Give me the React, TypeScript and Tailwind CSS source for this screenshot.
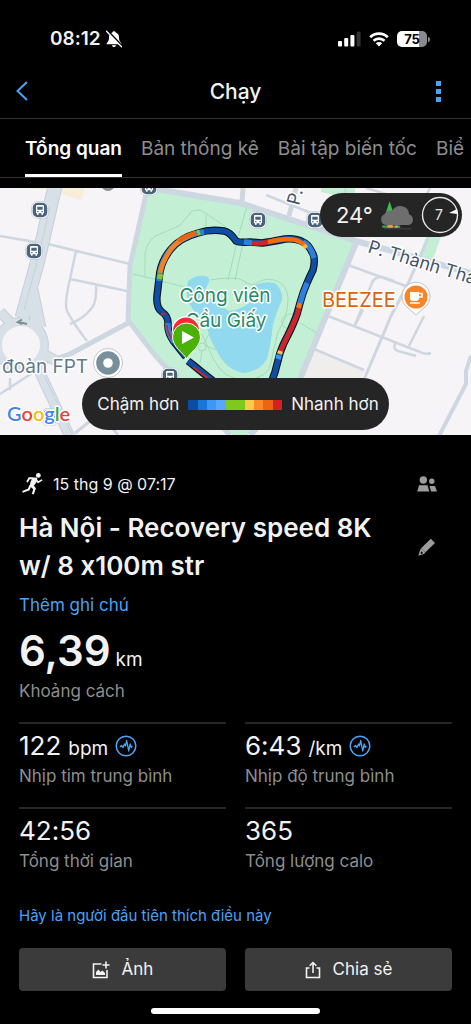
import React from "react";

const ROUTE =
  "M188 361 L192 364 L203 373 L222 388 L245 399 L262 396 L270 386 L275 372 L280 353 Q283 344 288 335 Q294 323 297 314 L300 303 Q303 292 307 283 Q310 276 313 270 Q316 258 312 252 Q308 244 303 242 Q296 238 285 239 Q270 242 262 243 L250 242 Q240 243 236 241 Q230 232 224 231 Q210 229 198 233 Q180 238 171 249 Q160 262 159 279 L157 296 Q156 308 162 312 Q168 316 168 323 Q167 332 174 342 L186 357";

function BusStop({ x, y }: { x: number; y: number }) {
  return (
    <g transform={`translate(${x} ${y})`}>
      <rect x="-8.5" y="-8.5" width="17" height="17" rx="6" fill="#fff" stroke="#b9bfc6" strokeWidth="0.6" />
      <rect x="-7.3" y="-7.3" width="14.6" height="14.6" rx="5" fill="#4a647d" />
      <path
        fillRule="evenodd"
        fill="#fff"
        d="M-4-4q0-1 1-1h6q1 0 1 1v7.3h-1v1.4h-1.600v-1.400h-2.800v1.400h-1.600v-1.400h-1zM-2.700-3.200v3h5.400v-3zM-2.800 1.100v1.200h1.300v-1.200zM1.500 1.100v1.200h1.300v-1.200z"
      />
    </g>
  );
}

function RouteMap() {
  const halo = { paintOrder: "stroke", stroke: "#fff", strokeWidth: 3, strokeLinejoin: "round" } as const;
  return (
    <svg
      viewBox="0 188 471 247"
      preserveAspectRatio="xMidYMid slice"
      className="block h-full w-full font-[Inter,sans-serif]"
      role="img"
      aria-label="Bản đồ"
    >
      <rect x="0" y="188" width="471" height="247" fill="#f6f4f6" />
      <path d="M60 188h24l-2 12-22-6zM28 188h18v2z" fill="#f7edd8" />
      <path d="M314 349l50 21-7 22h-62z" fill="#efeeec" />
      <path d="M321 188h34v6l-16 2-18-4zM427 234h15l-10 28h-15z" fill="#c3f0d5" />
      <path d="M147 188L240 203 356 241 296 384 248 435H232L184 384 150 350 128 318 130 266z" fill="#c3f0d5" />

      <g fill="none" stroke="#a0dcba" strokeWidth="1">
        <path d="M145 277V258q-1-12 10-22l24-10 13-15 8-1 8 5 18 12M206 215v14M133 274l25 6M158 280l30 8M237 242l-9 38M243 243l-8 37M247 206l-8 28q-6 6 3 8" />
        <path d="M210 280q24-4 32 0 10 8 16 2c12-6 30-2 30 18q0 16-10 32l-7 30q-2 16-25 18-22 0-32-20l-12-26M300 323l17 10M302 315q-14-4-20 4-2 8 8 10" />
        <circle cx="202" cy="347" r="4" />
        <path d="M186 332l14 12M206 346l10 4M202 351l-2 12M204 343l8-14" />
      </g>
      <path
        d="M188 281q10-8 20-4 3 3-1 9-4 7 2 12 6 4 20 13 16-2 24-12 6-10 2-14 8-4 20-2 8 7 7 17-4 8-9 24-2 20-6 35-8 13-24 14-18-4-26-22-6-8-10-23-12-14-18-25-4-12-1-22z"
        fill="#90d9ee"
      />

      <g fill="none" stroke="#cdd7e1" strokeLinejoin="round">
        <g strokeWidth="2.500">
          <path d="M0 236l35 6M48 244l82 20M76 251l-6 28q-6 25-3 32 6 12 20 30M70 279l57 12M96 286q1 18-6 24-6 8-20 14" />
          <path d="M0 394l37-24M10 378v12" />
          <path d="M348 265l55 20 24 8M355 325l17-42q2-6 10-6l12 4M328 316l92 36q6 3 11 1M395 343q-2 7 3 8l18 5M424 316l-15 30M363 310l-9 17M314 349l50 21M346 188l-3 10M366 188l20 6M266 195l50 20M430 188l-4 8" />
        </g>
        <path d="M429 236l-22 50-16 30-28 66" strokeWidth="3" />
        <path d="M243 188l-1 14M296 188l-7 28" strokeWidth="5" />
        <path d="M130 322l-60 32-24 8" strokeWidth="5" />
        <path d="M471 356l-5 15v13l-27 52" strokeWidth="4" />
        <path d="M75 433l18-14M118 435l-8-10" strokeWidth="3" />
      </g>
      <g fill="none" stroke="#cdd7e1" strokeLinejoin="round">
        <path d="M147 190l-17 76-2 54 26 34 32 36 44 45" strokeWidth="5" />
        <path d="M150 188l90 15 116 38 115 32" strokeWidth="6" />
        <path d="M356 243l-58 141-48 51" strokeWidth="6" />
      </g>
      <g fill="none">
        <path d="M55 186L38 260 22 318M31 290l8 38" stroke="#c5d0da" strokeWidth="15" />
        <circle cx="21" cy="345" r="23" stroke="#c5d0da" strokeWidth="10" />
        <path d="M0 312l12 12M36 364l34 73M44 354l14 8" stroke="#c5d0da" strokeWidth="11" />
        <path d="M55 186L38 260 22 318M31 290l8 38" stroke="#d8e0e7" strokeWidth="13" />
        <circle cx="21" cy="345" r="23" stroke="#d8e0e7" strokeWidth="8" fill="#f6f4f6" />
        <path d="M0 312l12 12M36 364l34 73M44 354l14 8" stroke="#d8e0e7" strokeWidth="9" />
        <path d="M50 207L36 266 24 310M45 377l28 60" stroke="#c5d0da" strokeWidth="1" />
        <path d="M27 324l-9-2 4-2.500M18 322l4 2" stroke="#7e8c98" strokeWidth="2" />
      </g>

      <BusStop x={40} y={210} />
      <BusStop x={34} y={251} />
      <BusStop x={149} y={187} />
      <BusStop x={258} y={220} />
      <BusStop x={315} y={220} />
      <BusStop x={170} y={376} />
      <BusStop x={50} y={417} />
      <circle cx="108" cy="184" r="7" fill="#8b8f93" />

      <g>
        <text x="2" y="373" fontSize="19" fill="#5f7a8b" {...halo}>đoàn FPT</text>
        <text x="322" y="307" fontSize="20" fill="#d9630f" {...halo}>BEEZEE</text>
        <text transform="translate(367 252) rotate(17)" fontSize="18" fill="#44546b" {...halo}>P. Thành Thái</text>
        <text transform="translate(299 206) rotate(-76)" fontSize="18" fill="#44546b" {...halo}>P.</text>
      </g>

      <g>
        <path d="M416 315l-9-8a14 14 0 1 1 18 0z" fill="#fff" stroke="#b5b2b2" strokeWidth="0.800" />
        <circle cx="416" cy="297" r="11.500" fill="#fb8427" />
        <path d="M410 292h9v6q0 3-3 3h-3q-3 0-3-3z" fill="#fff" />
        <path d="M419 293.500h3v3.500h-3M410 303h10" fill="none" stroke="#fff" strokeWidth="1.500" />
        <circle cx="108" cy="363" r="14.500" fill="#fff" stroke="#b5babf" strokeWidth="0.800" />
        <circle cx="108" cy="363" r="8.300" fill="none" stroke="#78909c" strokeWidth="7" />
      </g>

      <g fill="none" strokeLinejoin="round" strokeLinecap="butt">
        <path d={ROUTE} stroke="#111" strokeWidth="7.500" />
        <path d={ROUTE} stroke="#0d4ea6" strokeWidth="5.400" />
        <path d="M159 281Q160 262 171 249 180 238 198 233l6-1M300 303q3-11 7-20M244 242l8 1M303 242q6 3 9 10l2 6M168 323q-1 9 6 19" stroke="#2f7fe0" strokeWidth="5.400" />
        <path d="M160 273Q162 262 171 249 180 238 196 233" stroke="#f58220" strokeWidth="4.600" />
        <path d="M178 241q7-5 18-8" stroke="#ea6412" strokeWidth="4.600" />
        <path d="M159.500 279l1-5M197 233l3-1" stroke="#86c81e" strokeWidth="5.400" />
        <path d="M252 243q5 1 17-1" stroke="#d62326" strokeWidth="4.600" />
        <path d="M268 242q16-4 25-2.500 7 1 12 6" stroke="#ee6c12" strokeWidth="4.600" />
        <path d="M304 245l2.500 3" stroke="#fbb82f" strokeWidth="4" />
        <path d="M299 308l-2 7q-3 8-9 20l-8 17" stroke="#d62326" strokeWidth="4.600" />
        <path d="M300 303l-1.500 5" stroke="#ee7a1a" strokeWidth="5" />
        <path d="M280.500 351l-1 3" stroke="#fbc64a" strokeWidth="5" />
        <path d="M279 355l-1 4" stroke="#3e97f4" strokeWidth="5.400" />
        <path d="M161 315l4-2M167 325q0 8 6 15M193 367l16 12" stroke="#d62326" strokeWidth="1.800" />
      </g>

      <g fontSize="19" textAnchor="middle" fill="#238a66" {...halo}>
        <text x="225" y="302">Công viên</text>
        <text x="226" y="327">Cầu Giấy</text>
      </g>

      <path d="M186 356l-10-13a14 14 0 1 1 20 0z" fill="#fff" transform="translate(0 -3)" />
      <path d="M186 350l-9-10a13 13 0 1 1 18 0z" fill="#ff2732" />
      <path d="M186.500 359c-3-6-14-12-14-22a14 14 0 0 1 28 0c0 10-11 16-14 22z" fill="#49b205" stroke="#fff" strokeWidth="1" />
      <path d="M182 331v13l12-6.500z" fill="#fff" />

      <text x="7" y="421" fontSize="20" fontWeight="600" className="font-[Lato,sans-serif]" {...halo}>
        <tspan fill="#4285f4">G</tspan>
        <tspan fill="#ea4335">o</tspan>
        <tspan fill="#fbbc05">o</tspan>
        <tspan fill="#4285f4">g</tspan>
        <tspan fill="#34a853">l</tspan>
        <tspan fill="#ea4335">e</tspan>
      </text>
    </svg>
  );
}

function StatusBar() {
  return (
    <div className="flex h-16 items-end justify-between pr-[41px] pb-[13px] pl-[50px]">
      <div className="flex h-6 items-center gap-1">
        <span className="text-[19px] leading-6 font-semibold">08:12</span>
        <svg viewBox="0 0 18 18" className="h-[18px] w-[18px]" aria-hidden="true">
          <path d="M9 1.200c1 0 1.600.6 1.700 1.400C13 3.300 14 5 14 7.500c0 3 .8 4.200 2.300 5.400v1.300H1.700v-1.300C3.200 11.700 4 10.500 4 7.500 4 5 5 3.300 7.300 2.600 7.400 1.800 8 1.200 9 1.200zM6.800 15.200h4.400c-.3 1.100-1.100 1.800-2.200 1.800s-1.900-.7-2.200-1.800z" fill="#fff" />
          <path d="M2.500.8l14.800 15.400" stroke="#000" strokeWidth="2" />
          <path d="M1.500 1.200l15 15.600" stroke="#fff" strokeWidth="1.300" strokeLinecap="round" />
        </svg>
      </div>
      <div className="flex h-6 items-center gap-2">
        <svg viewBox="0 0 23 16" className="h-4 w-[23px]" aria-hidden="true">
          <rect x="0" y="10" width="4" height="5.500" rx="1" fill="#fff" />
          <rect x="6.200" y="7" width="4" height="8.500" rx="1" fill="#fff" />
          <rect x="12.400" y="4" width="4" height="11.500" rx="1" fill="#fff" />
          <rect x="18.600" y="0.500" width="4" height="15" rx="1" fill="#333" />
        </svg>
        <svg viewBox="0 0 20 15" className="h-[15px] w-5" aria-hidden="true">
          <g fill="none" stroke="#fff" strokeWidth="2.600">
            <path d="M1.200 5.200a12.600 12.600 0 0 1 17.600 0" />
            <path d="M4.500 8.800a8 8 0 0 1 11 0" />
          </g>
          <path d="M10 14.500l-3.200-3.300a4.600 4.600 0 0 1 6.400 0z" fill="#fff" />
        </svg>
        <div className="flex items-center gap-px">
          <div className="flex h-4 w-[30px] items-center justify-center overflow-hidden rounded-[5px] bg-linear-to-r from-white from-75% to-[#8a8a8a] to-75% text-[13px] leading-4 font-bold text-black">
            75
          </div>
          <div className="h-[5px] w-[2px] rounded-r bg-[#8a8a8a]" />
        </div>
      </div>
    </div>
  );
}

function PulseIcon() {
  return (
    <svg viewBox="0 0 22 22" className="h-[22px] w-[22px] shrink-0 self-center" fill="none" stroke="#4aa3f7" aria-hidden="true">
      <circle cx="11" cy="11" r="9.800" strokeWidth="1.500" />
      <path d="M4.800 12l1.700-1.500 1.500 2 1.500-3.500 1 2L11.700 5.500l2 10.500 1.500-7 1.200 3.500 1-1.500" strokeWidth="1.300" strokeLinejoin="round" />
    </svg>
  );
}

function Metric({ value, unit, label, pulse }: { value: string; unit?: string; label: string; pulse?: boolean }) {
  return (
    <div className="h-[85px] border-t-2 border-[#262626] pt-[6px]">
      <div className="flex h-8 items-baseline gap-[7px]">
        <span className="text-[26px] leading-8">{value}</span>
        {unit && <span className="text-[19px] leading-8">{unit}</span>}
        {pulse && <PulseIcon />}
      </div>
      <div className="text-[17px] leading-7 text-[#8e8e8e]">{label}</div>
    </div>
  );
}

const TABS = ["Tổng quan", "Bản thống kê", "Bài tập biến tốc", "Biểu đồ"];
const SCALE = ["bg-[#0b4da2]", "bg-[#1976d8]", "bg-[#3e97f6]", "bg-[#57a8fc]", "bg-[#7fc81e]", "bg-[#7fc81e]", "bg-[#fdca4c]", "bg-[#fb8b28]", "bg-[#ec6610]", "bg-[#d42024]"];

export default function App() {
  return (
    <div className="flex min-h-screen flex-col bg-black font-[Inter,sans-serif] text-[#f2f2f2] [font-feature-settings:'calt'_0]">
      <StatusBar />
      <header className="grid h-[54px] grid-cols-[1fr_auto_1fr] items-center px-4">
        <button aria-label="Quay lại" className="justify-self-start">
          <svg viewBox="0 0 12 20" className="h-5 w-3" fill="none" stroke="#4aa3f7" strokeWidth="2">
            <path d="M11 1L1.500 10 11 19" />
          </svg>
        </button>
        <h1 className="pt-[2px] text-[21px] leading-7 font-medium">Chạy</h1>
        <button aria-label="Thêm" className="flex w-[34px] flex-col items-center gap-[3px] justify-self-end">
          <span className="h-[5px] w-[5px] bg-[#4aa3f7]" />
          <span className="h-[5px] w-[5px] bg-[#4aa3f7]" />
          <span className="h-[5px] w-[5px] bg-[#4aa3f7]" />
        </button>
      </header>
      <nav className="mb-[10px] h-[60px] border-t border-b border-[#333] pr-[6px]">
        <div className="flex h-full gap-[19px] overflow-hidden pl-[25px] text-[19px] whitespace-nowrap">
          {TABS.map((t, i) => (
            <button
              key={t}
              className={
                i === 0
                  ? "shrink-0 border-b-3 border-white pt-[5px] font-semibold text-white"
                  : "shrink-0 border-b-3 border-transparent pt-[5px] text-[#8e8e8e]"
              }
            >
              {t}
            </button>
          ))}
        </div>
      </nav>

      <section className="relative h-[247px] overflow-hidden">
        <RouteMap />
        <div className="absolute top-[5px] right-[9px] flex h-11 w-[142px] items-center justify-between rounded-full bg-[#252525] pr-[3px] pl-4">
          <span className="text-[22px] leading-7">24°</span>
          <svg viewBox="0 0 34 28" className="h-[30px] w-9" aria-hidden="true">
            <path d="M6 13L10 1l4 12z" fill="#34c04e" />
            <path d="M3 24h17v2H3z" fill="#34b04e" />
            <path d="M8 23h5v3H8zM15 24h3v2h-3z" fill="#f19a2e" />
            <path d="M5 27h26" stroke="#444" strokeWidth="1" />
            <path d="M6.500 23.500a5.500 5.500 0 0 1-1-10.500 6 6 0 0 1 7-3 8.500 8.500 0 0 1 16 3.500 5.200 5.200 0 0 1-.5 10z" fill="#6e6e6e" />
          </svg>
          <svg viewBox="0 0 38 38" className="h-[38px] w-[38px]" aria-hidden="true">
            <circle cx="19" cy="19" r="17.500" fill="none" stroke="#e6e6e6" strokeWidth="1.400" />
            <path d="M28 17l8-4 1 5z" fill="#fff" />
            <text x="18" y="24" fontSize="14" textAnchor="middle" fill="#e6e6e6">7</text>
          </svg>
        </div>
        <div className="absolute inset-x-[82px] bottom-[5px] flex h-[52px] items-center justify-center gap-[9px] rounded-full bg-[#252525] pt-px pl-[5px] text-[17px] whitespace-nowrap">
          <span>Chậm hơn</span>
          <span className="flex h-[10px] w-[94px] shrink-0">
            {SCALE.map((c, i) => (
              <span key={i} className={`h-full flex-1 ${c}`} />
            ))}
          </span>
          <span>Nhanh hơn</span>
        </div>
      </section>

      <main className="flex flex-col px-[19px] pt-9">
        <div className="flex h-[26px] items-center">
          <svg viewBox="0 0 60 64" className="mr-[10px] ml-[3px] h-[22px] w-[21px]" fill="none" stroke="#f2f2f2" strokeLinejoin="round" aria-hidden="true">
            <circle cx="47" cy="7" r="7" fill="#f2f2f2" stroke="none" />
            <path d="M28 12L44 14 42 26 34 37 40 44 34 62 28 61 32 47 22 38 24 26 28 18 22 18 16 28 12 25 19 12z" fill="#f2f2f2" stroke="none" />
            <path d="M40 18l6 9 12-7" strokeWidth="5" />
            <path d="M24 36l-5 12-18 7" strokeWidth="6" />
          </svg>
          <span className="text-base leading-6">15 thg 9 @ 07:17</span>
          <svg viewBox="0 0 20 16" className="mr-[15px] ml-auto h-4 w-5" fill="#9c9c9c" aria-hidden="true">
            <circle cx="6.300" cy="4" r="3.700" />
            <circle cx="14.800" cy="5.300" r="2.700" />
            <path d="M2 9.300h8.500l1.800 6.200H.2zM12.500 10h5.500l2 5.500h-6z" />
          </svg>
        </div>
        <div className="mt-3 flex items-center gap-6">
          <h2 className="min-w-0 flex-1 text-[26px] leading-[38px] font-semibold">
            Hà Nội - Recovery speed 8K w/ 8 x100m str
          </h2>
          <button aria-label="Sửa" className="mr-4">
            <svg viewBox="0 0 18 18" className="h-[18px] w-[18px]" fill="#9c9c9c">
              <path d="M12.800.8l4.200 4.200L7.500 14.200 3.300 10z" />
              <path fillRule="evenodd" d="M3.300 10l4.200 4.200L6 16 .3 17.700 2 12zM3.200 13.200l-.7 2 .7.700 2-.7z" />
            </svg>
          </button>
        </div>
        <a href="#note" className="mt-2 self-start text-[17px] leading-6 text-[#4aa3f7]">Thêm ghi chú</a>
        <div className="mt-2 flex h-[52px] items-baseline gap-[5px]">
          <span className="text-[42px] leading-[52px] font-semibold">6,39</span>
          <span className="text-[19px]">km</span>
        </div>
        <div className="text-[17px] leading-7 text-[#8e8e8e]">Khoảng cách</div>
        <div className="mt-[17px] grid grid-cols-2 gap-x-[19px]">
          <Metric value="122" unit="bpm" label="Nhịp tim trung bình" pulse />
          <Metric value="6:43" unit="/km" label="Nhịp độ trung bình" pulse />
          <Metric value="42:56" label="Tổng thời gian" />
          <Metric value="365" label="Tổng lượng calo" />
        </div>
        <a href="#like" className="mt-[12px] self-start text-[15px] leading-6 text-[#4aa3f7]">Hãy là người đầu tiên thích điều này</a>
        <div className="mt-5 grid grid-cols-2 gap-[19px]">
          <button className="flex h-[43px] items-center justify-center gap-3 rounded bg-[#3b3b3b] text-[17px]">
            <svg viewBox="0 0 18 18" className="h-[18px] w-[18px]" fill="none" stroke="#f2f2f2" strokeWidth="1.600" aria-hidden="true">
              <path d="M9.500 3H1.500v13.500H15V9M14 .5v7M10.500 4h7" />
              <path d="M4 14v-3l2.500-2.500L8.500 11l2-1.500L13 12v2z" fill="#f2f2f2" stroke="none" />
            </svg>
            Ảnh
          </button>
          <button className="flex h-[43px] items-center justify-center gap-3 rounded bg-[#3b3b3b] text-[17px]">
            <svg viewBox="0 0 16 18" className="h-[18px] w-4" fill="none" stroke="#f2f2f2" strokeWidth="1.600" aria-hidden="true">
              <path d="M4.500 7H1.500v9.500h13V7h-3M8 12V1.500M4.700 4.700L8 1.500l3.300 3.200" />
            </svg>
            Chia sẻ
          </button>
        </div>
      </main>
      <div className="mx-auto mt-[17px] mb-[9px] h-[6px] w-[169px] rounded-full bg-white" />
    </div>
  );
}
